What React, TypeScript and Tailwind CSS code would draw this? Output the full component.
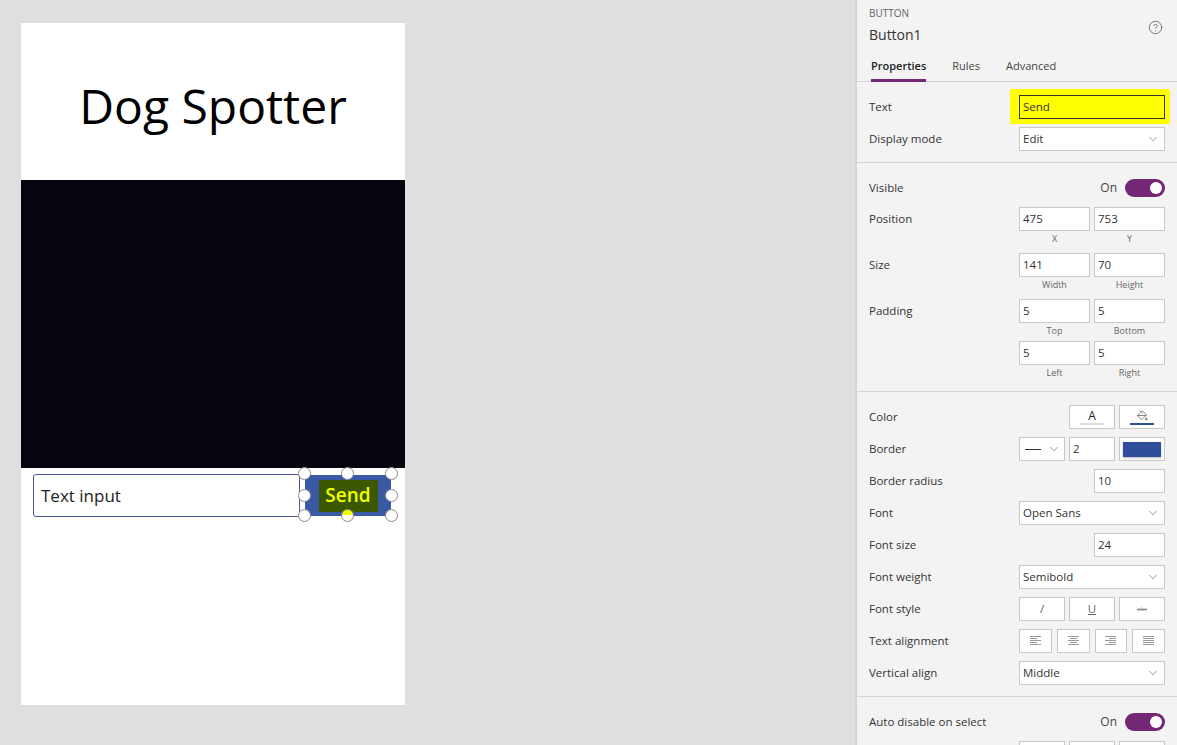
import { ChevronDown, CircleHelp, PaintBucket } from "lucide-react";

const font = { fontFamily: '"Open Sans", "Noto Sans", sans-serif' };

const Box = ({ children, className = "" }: { children?: React.ReactNode; className?: string }) => (
  <div
    className={`h-[24px] bg-white border border-[#c8c8c8] flex items-center px-[3px] text-[11.5px] text-[#333] ${className}`}
  >
    {children}
  </div>
);

const Dropdown = ({ value }: { value: string }) => (
  <Box className="w-[146px] justify-between pr-[4px]">
    <span>{value}</span>
    <ChevronDown size={14} strokeWidth={1} color="#555" />
  </Box>
);

const Toggle = () => (
  <div className="flex items-center gap-[8px]">
    <span className="text-[12px] text-[#444]">On</span>
    <div className="w-[40px] h-[18px] rounded-full bg-[#742774] flex items-center justify-end pr-[3px]">
      <div className="w-[12px] h-[12px] rounded-full bg-white" />
    </div>
  </div>
);

const Row = ({ label, children }: { label: string; children?: React.ReactNode }) => (
  <div className="h-[32px] flex items-center justify-between">
    <span className="text-[11.5px] text-[#333]">{label}</span>
    {children}
  </div>
);

const PairBlock = ({
  label,
  vals,
}: {
  label?: string;
  vals: [string, string, string, string];
}) => (
  <div className="flex items-start justify-between">
    <span className="h-[24px] flex items-center text-[11.5px] text-[#333]">{label}</span>
    <div className="w-[146px] grid grid-cols-2 gap-x-[4px]">
      <Box>{vals[0]}</Box>
      <Box>{vals[1]}</Box>
      <div className="h-[16px] text-center text-[9px] leading-[16px] text-[#666]">{vals[2]}</div>
      <div className="h-[16px] text-center text-[9px] leading-[16px] text-[#666]">{vals[3]}</div>
    </div>
  </div>
);

const AlignIcon = ({ kind }: { kind: "left" | "center" | "right" | "justify" }) => {
  const lines = [0, 1, 2, 3, 4];
  return (
    <svg width="11" height="10" viewBox="0 0 11 10">
      {lines.map((i) => {
        const short = i % 2 === 1;
        let x1 = 0;
        let x2 = 11;
        if (short && kind === "left") x2 = 7;
        if (short && kind === "center") {
          x1 = 2;
          x2 = 9;
        }
        if (short && kind === "right") x1 = 4;
        return <line key={i} x1={x1} x2={x2} y1={i * 2 + 0.5} y2={i * 2 + 0.5} stroke="#9a9a9a" strokeWidth="1" />;
      })}
    </svg>
  );
};

const Handle = ({ className, yellow = false }: { className: string; yellow?: boolean }) => (
  <div
    className={`absolute w-[13px] h-[13px] rounded-full border border-[#8a8a8a] ${
      yellow ? "bg-[linear-gradient(#f0ff00_50%,#ffffff_50%)]" : "bg-white"
    } ${className}`}
  />
);

export default function App() {
  return (
    <div className="w-[1177px] h-[745px] bg-[#dfdfdf] flex overflow-hidden" style={font}>
      {/* canvas */}
      <div className="pl-[21px] pt-[23px]">
        <div className="w-[384px] h-[682px] bg-white flex flex-col">
          <div className="h-[157px] flex items-center justify-center pt-[8px]">
            <h1 className="text-[48px] text-black font-normal leading-none">Dog Spotter</h1>
          </div>
          <div className="h-[288px] bg-[#05050f]" />
          <div className="flex pt-[6px] pl-[12px]">
            <div className="w-[267px] h-[43px] border border-[#4c559c] rounded-[3px] flex items-center pl-[7px] text-[17px] text-[#222]">
              Text input
            </div>
            <div className="relative ml-[5px] mt-[1px]">
              <div className="w-[86px] h-[41px] bg-[#3b5aa6] rounded-[3px] flex items-center justify-center">
                <div className="w-[59px] h-[32px] bg-[#3b5800] flex items-center justify-center text-[19px] font-semibold text-[#f0ff00]">
                  Send
                </div>
              </div>
              <Handle className="-left-[7px] -top-[8px]" />
              <Handle className="left-[36px] -top-[8px]" />
              <Handle className="-right-[7px] -top-[8px]" />
              <Handle className="-left-[7px] top-[14px]" />
              <Handle className="-right-[7px] top-[14px]" />
              <Handle className="-left-[7px] top-[34px]" />
              <Handle className="left-[36px] top-[34px]" yellow />
              <Handle className="-right-[7px] top-[34px]" />
            </div>
          </div>
        </div>
      </div>

      <div className="flex-1" />

      {/* properties panel */}
      <div className="w-[322px] h-[745px] bg-[#f3f3f3] border-l-2 border-[#d4d4d4] flex flex-col overflow-hidden">
        <div className="shrink-0 h-[53px] px-[12px] pt-[7px] relative">
          <div className="text-[10px] leading-[12px] text-[#666]">BUTTON</div>
          <div className="mt-[6px] text-[14px] leading-[20px] text-[#333]">Button1</div>
          <CircleHelp size={15} strokeWidth={1.2} color="#555" className="absolute right-[14px] top-[20px]" />
        </div>
        <div className="shrink-0 h-[29px] border-b border-[#d4d4d4] flex gap-[26px] pl-[14px] text-[11px]">
          <div className="h-[29px] border-b-[3px] border-[#742774] flex items-center font-semibold text-[#222]">
            Properties
          </div>
          <div className="h-[29px] flex items-center pb-[3px] text-[#444]">Rules</div>
          <div className="h-[29px] flex items-center pb-[3px] text-[#444]">Advanced</div>
        </div>

        {/* section 1 */}
        <div className="shrink-0 px-[12px] pt-[9px] pb-[7px] border-b border-[#d4d4d4]">
          <Row label="Text">
            <div className="relative">
              <div className="absolute -left-[9px] -right-[5px] -top-[6px] -bottom-[5px] bg-[#ffff00] rounded-[2px]" />
              <div className="relative w-[146px] h-[24px] bg-[#ffff00] border border-[#333] flex items-center px-[3px] text-[11.5px] text-[#333]">
                Send
              </div>
            </div>
          </Row>
          <Row label="Display mode">
            <Dropdown value="Edit" />
          </Row>
        </div>

        {/* section 2 */}
        <div className="shrink-0 px-[12px] pt-[9px] pb-[10px] border-b border-[#d4d4d4]">
          <Row label="Visible">
            <Toggle />
          </Row>
          <div className="mt-[3px]">
            <PairBlock label="Position" vals={["475", "753", "X", "Y"]} />
          </div>
          <div className="mt-[6px]">
            <PairBlock label="Size" vals={["141", "70", "Width", "Height"]} />
          </div>
          <div className="mt-[6px]">
            <PairBlock label="Padding" vals={["5", "5", "Top", "Bottom"]} />
          </div>
          <div className="mt-[2px]">
            <PairBlock vals={["5", "5", "Left", "Right"]} />
          </div>
        </div>

        {/* section 3 */}
        <div className="shrink-0 px-[12px] pt-[9px] pb-[7px] border-b border-[#d4d4d4]">
          <Row label="Color">
            <div className="flex gap-[4px]">
              <Box className="w-[46px] flex-col justify-center gap-[1px]">
                <span className="text-[12px] leading-[13px] text-[#222]">A</span>
                <span className="w-[24px] h-[2px] bg-[#dedede]" />
              </Box>
              <Box className="w-[46px] flex-col justify-center gap-[2px]">
                <PaintBucket size={11} strokeWidth={1.3} color="#333" />
                <span className="w-[24px] h-[2px] bg-[#2f4f9b]" />
              </Box>
            </div>
          </Row>
          <Row label="Border">
            <div className="flex gap-[4px]">
              <Box className="w-[46px] justify-between pl-[5px] pr-[3px]">
                <span className="w-[16px] h-[1px] bg-[#333]" />
                <ChevronDown size={14} strokeWidth={1} color="#555" />
              </Box>
              <Box className="w-[46px]">2</Box>
              <Box className="w-[46px] justify-center">
                <span className="w-[38px] h-[15px] bg-[#2f4f9b] shadow-[0_1px_2px_rgba(0,0,0,0.3)]" />
              </Box>
            </div>
          </Row>
          <Row label="Border radius">
            <Box className="w-[71px]">10</Box>
          </Row>
          <Row label="Font">
            <Dropdown value="Open Sans" />
          </Row>
          <Row label="Font size">
            <Box className="w-[71px]">24</Box>
          </Row>
          <Row label="Font weight">
            <Dropdown value="Semibold" />
          </Row>
          <Row label="Font style">
            <div className="flex gap-[4px]">
              <Box className="w-[46px] justify-center text-[#555]">/</Box>
              <Box className="w-[46px] justify-center">
                <span className="underline text-[#666]">U</span>
              </Box>
              <Box className="w-[46px] justify-center">
                <span className="line-through text-[6px] text-[#888]">abc</span>
              </Box>
            </div>
          </Row>
          <Row label="Text alignment">
            <div className="w-[146px] grid grid-cols-4 gap-[5px]">
              <Box className="justify-center">
                <AlignIcon kind="left" />
              </Box>
              <Box className="justify-center bg-[#c8c8c8]">
                <AlignIcon kind="center" />
              </Box>
              <Box className="justify-center">
                <AlignIcon kind="right" />
              </Box>
              <Box className="justify-center">
                <AlignIcon kind="justify" />
              </Box>
            </div>
          </Row>
          <Row label="Vertical align">
            <Dropdown value="Middle" />
          </Row>
        </div>

        {/* section 4 */}
        <div className="shrink-0 px-[12px] pt-[9px]">
          <Row label="Auto disable on select">
            <Toggle />
          </Row>
          <div className="mt-[3px] flex justify-end gap-[4px]">
            <Box className="w-[46px]" />
            <Box className="w-[46px]" />
            <Box className="w-[46px]" />
          </div>
        </div>
      </div>
    </div>
  );
}
